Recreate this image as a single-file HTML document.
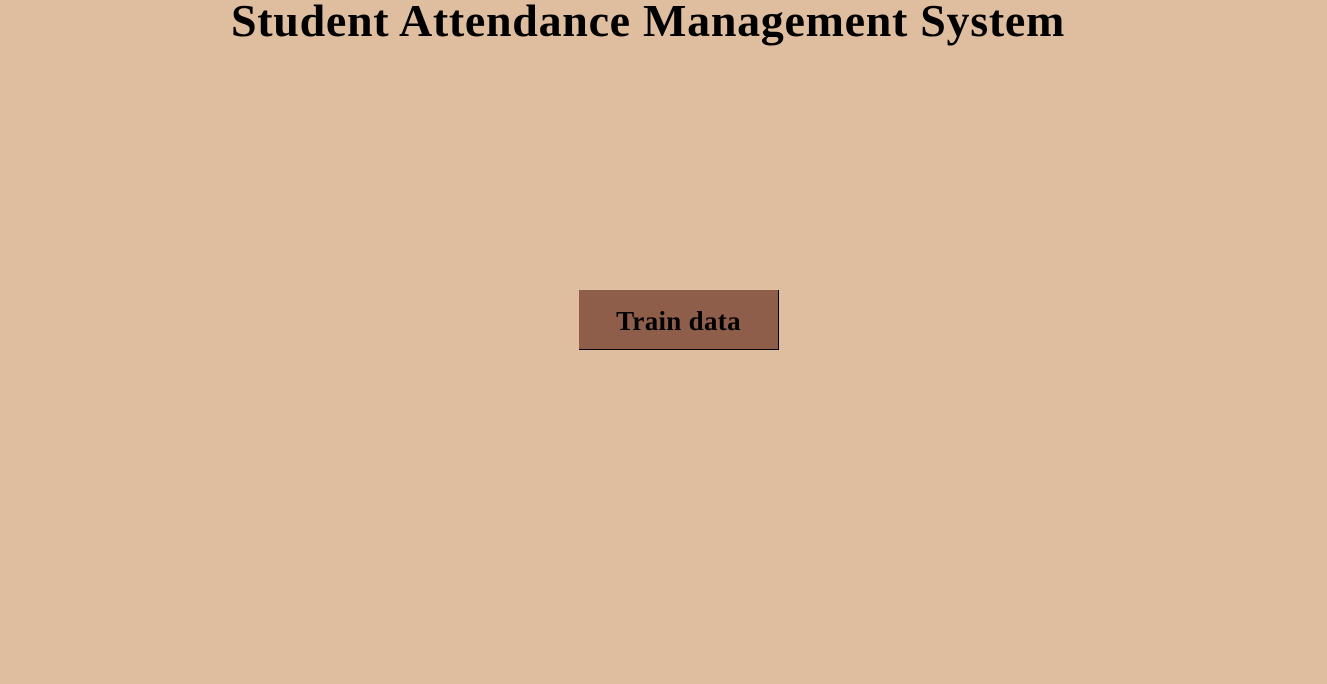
<!DOCTYPE html>
<html><head><meta charset="utf-8"><style>
html,body{margin:0;padding:0;width:1327px;height:684px;background:#dfbe9f;overflow:hidden;position:relative;}
h1{position:absolute;left:0;width:1296px;top:-6px;margin:0;text-align:center;font-family:"Liberation Serif",serif;font-weight:bold;font-size:46px;color:#000;white-space:nowrap;letter-spacing:0.7px}
.btn{position:absolute;left:579px;top:290px;width:199px;height:59px;background:#8f5e4a;border-right:1px solid #000;border-bottom:1px solid #000;box-sizing:content-box;font-family:"Liberation Serif",serif;font-weight:bold;font-size:27px;line-height:59px;text-align:center;color:#000;letter-spacing:0.3px}
.btn span{position:relative;left:0;top:2px}
</style></head><body>
<h1>Student Attendance Management System</h1>
<div class="btn"><span>Train data</span></div>
</body></html>
